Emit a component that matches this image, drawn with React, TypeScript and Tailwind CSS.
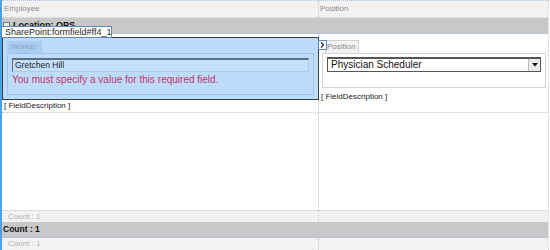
const Gray = ({ text }: { text: string }) => (
  <div className="flex h-[12px] border-t border-dotted border-[#c8c8c8] bg-[#f2f2f2] text-[#b2b2b2]">
    <div className="w-[317px] h-full border-r border-dotted border-[#c8c8c8] flex items-center pl-[6px]">
      {text}
    </div>
    <div className="flex-1" />
  </div>
);

export default function App() {
  return (
    <div className="w-[550px] h-[250px] overflow-hidden bg-white font-['Liberation_Sans',Arial,sans-serif] text-[8px] leading-none">
      <div className="h-full border-l-2 border-[#4aa3e8]">
        <div className="relative w-[547px] h-full border-r border-dotted border-[#c8c8c8]">
          {/* header */}
          <div className="flex h-[18px] border-t border-b border-dotted border-t-[#a9c6e4] border-b-[#c8c8c8] bg-[#f2f2f2] text-[#8c8c8c]">
            <div className="w-[317px] h-full border-r border-dotted border-[#c8c8c8] flex items-center pl-[2px]">
              Employee
            </div>
            <div className="flex-1 flex items-center pl-[1px]">Position</div>
          </div>

          {/* group */}
          <div className="flex items-center h-[16px] bg-[#c8c8c8] border-b border-dotted border-[#9fc2e6] font-bold text-[9px] text-[#111]">
            <div className="ml-[1px] mr-[3px] w-[7px] h-[7px] border border-[#777] bg-[#e8e8e8]" />
            Location: OPS
          </div>

          <div className="absolute left-[-1px] top-[26px] w-[111px] h-[12px] bg-white border border-[#5b86c8] flex items-center pl-[3px] text-[9px] text-[#2a2a2a] z-10">
            SharePoint:formfield#ff4_1
          </div>

          {/* main row */}
          <div className="flex h-[176px]">
            <div className="relative w-[317px] h-full border-r border-dotted border-[#c8c8c8]">
              <div className="h-[79px] border-b border-dotted border-[#c8c8c8] pt-[3px]">
                <div className="w-[317px] h-[63px] border border-[#3c3c3c] bg-[#bcdcfa] pt-[3px] px-[4px]">
                  <div className="w-[35px] h-[12px] bg-[#a9cdf2] text-[#8ea3b9] flex items-center pl-[4px]">
                    Worker
                  </div>
                  <div className="h-[42px] border border-[#9cc4ec] pt-[4px] px-[4px]">
                    <div className="h-[14px] border-t-2 border-l border-[#5b6e86] border-r border-b border-r-[#a9cbee] border-b-[#a9cbee] bg-[#c4e0fc] flex items-center pl-[2px] text-[8.5px] text-[#222]">
                      Gretchen Hill
                    </div>
                    <div className="mt-[2px] text-[10px] leading-[11px] text-[#c4356c]">
                      You must specify a value for this required field.
                    </div>
                  </div>
                </div>
                <div className="h-[11px] flex items-center pl-[2px] text-[#222]">
                  [ FieldDescription ]
                </div>
              </div>
              <div className="absolute left-[316px] top-[6px] w-[9px] h-[10px] bg-white border border-[#5a88cf] flex items-center justify-center z-10">
                <svg width="5" height="6" viewBox="0 0 5 6">
                  <path d="M1 0.5 L3.5 3 L1 5.5" stroke="#222" strokeWidth="1.2" fill="none" />
                </svg>
              </div>
            </div>

            <div className="flex-1 h-full">
              <div className="h-[79px] border-b border-dotted border-[#c8c8c8] pt-[6px]">
                <div className="ml-[6px] w-[34px] h-[13px] border border-b-0 border-[#d2d2d2] bg-[#f2f2f2] text-[#8c8c8c] flex items-center pl-[1px]">
                  Position
                </div>
                <div className="ml-[3px] mr-[2px] h-[35px] border border-[#d4d4d4] pt-[3px] px-[4px]">
                  <div className="flex h-[15px] border border-t-2 border-[#555] bg-white">
                    <div className="flex-1 flex items-center pl-[3px] text-[10px] text-[#111]">
                      Physician Scheduler
                    </div>
                    <div className="w-[12px] h-full border-l border-[#bbb] bg-[#ececec] flex items-center justify-center">
                      <svg width="6" height="4" viewBox="0 0 6 4">
                        <path d="M0 0 H6 L3 3.5 Z" fill="#111" />
                      </svg>
                    </div>
                  </div>
                </div>
                <div className="mt-[3px] ml-[2px] h-[11px] flex items-center text-[#222]">
                  [ FieldDescription ]
                </div>
              </div>
            </div>
          </div>

          <Gray text="Count : 1" />
          <div className="flex items-center h-[16px] bg-[#c8c8c8] border-b border-dotted border-[#9fc2e6] font-bold text-[8.5px] text-[#111] pl-[1px]">
            Count : 1
          </div>
          <div className="flex h-[12px] bg-[#f2f2f2] text-[#b2b2b2]">
            <div className="w-[317px] h-full border-r border-dotted border-[#c8c8c8] flex items-center pl-[6px]">
              Count : 1
            </div>
            <div className="flex-1" />
          </div>
        </div>
      </div>
    </div>
  );
}
